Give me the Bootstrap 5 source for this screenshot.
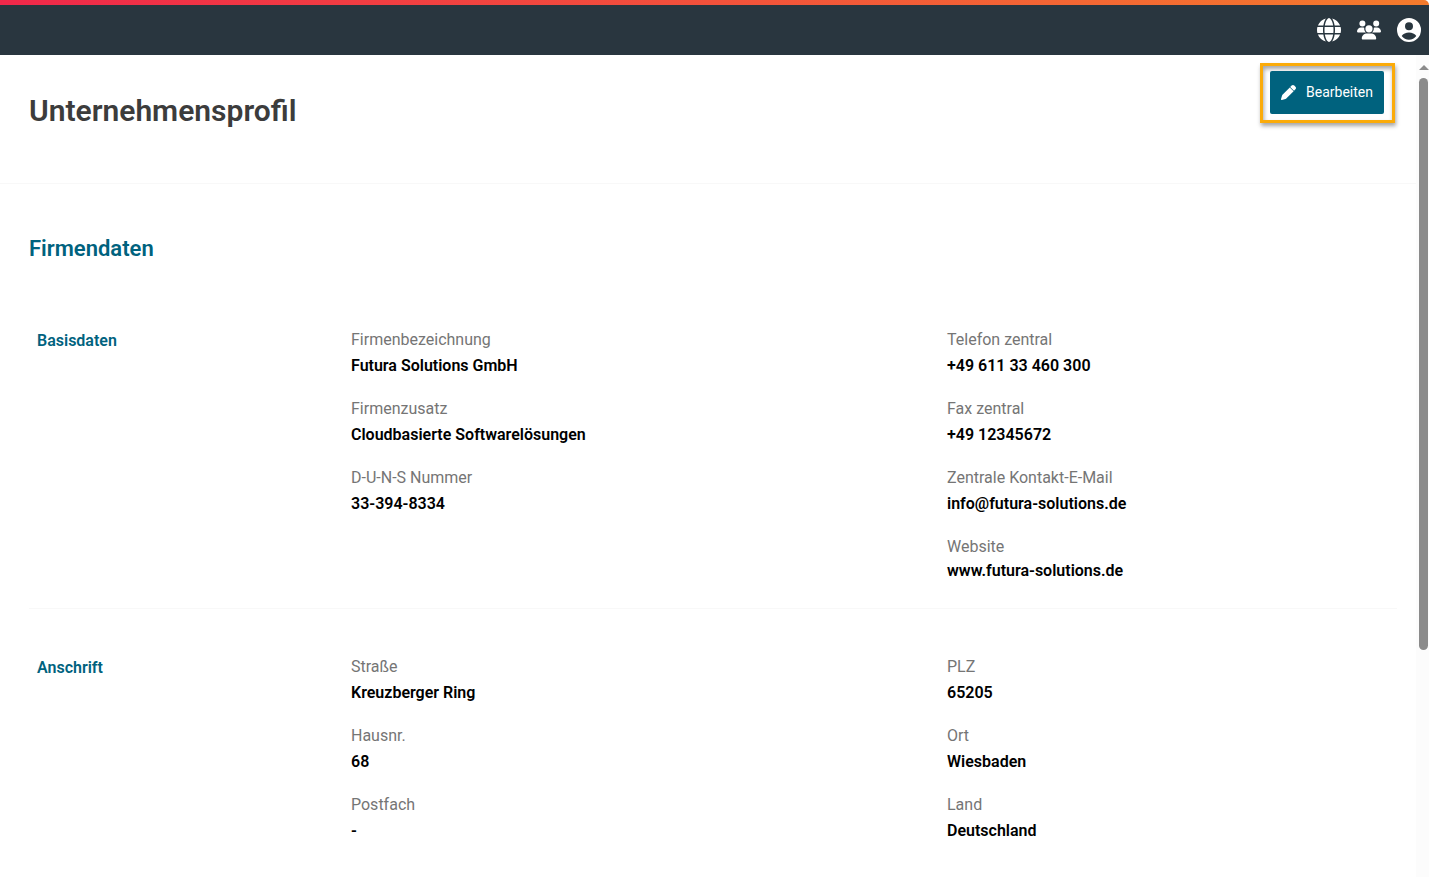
<!DOCTYPE html>
<html lang="de">
<head>
<meta charset="utf-8">
<meta name="viewport" content="width=device-width, initial-scale=1">
<title>Unternehmensprofil</title>
<link href="https://cdn.jsdelivr.net/npm/bootstrap@5.3.0/dist/css/bootstrap.min.css" rel="stylesheet">
<style>
  body { font-family: Roboto, "Liberation Sans", sans-serif; font-size: 16px; color: #000; background: #fff; }
  .accent-bar { height: 5px; background: linear-gradient(90deg, #f0284a, #f47b2c); border-top-right-radius: 6px; }
  .topbar { height: 50px; background: #29363f; padding-right: 8px; }
  .topbar a { color: #fff; width: 24px; height: 24px; }
  .page-head { height: 129px; padding: 8px 21px 0 29px; border-bottom: 1px solid #f8f8f8; }
  .page-head h1 { font-size: 30px; line-height: 40px; font-weight: 600; color: #3c3c3c; padding-top: 28px; }
  .edit-frame { border: 3px solid #fbab09; padding: 5px 8px 6px 7px; box-shadow: 1px 3px 4px rgba(0,0,0,.35), inset 1px 3px 4px rgba(0,0,0,.35); }
  .edit-btn { height: 43px; padding: 0 11px 1px; gap: 10px; border: 0; border-radius: 2px; background: #00627e; color: #fff; font-size: 14px; line-height: 20px; }
  .edit-btn:hover { background: #00526a; color: #fff; }
  .page-body { padding: 49px 19px 0 29px; }
  h2 { font-size: 22px; line-height: 32px; font-weight: 600; color: #00627e; }
  .data-section { display: grid; grid-template-columns: 157fr 298fr 229fr; padding-bottom: 9px; }
  .data-section:first-of-type { padding-top: 50px; }
  .data-section + .data-section { padding-top: 45px; border-top: 1px solid #f8f8f8; }
  .data-section > * { padding: 0 8px; }
  h3 { font-size: 16px; line-height: 28px; font-weight: 600; color: #00627e; }
  dt { font-weight: 400; line-height: 26px; color: #757575; }
  dd { font-weight: 600; line-height: 26px; margin: 0 0 17px; }
  dd.web-address { line-height: 22px; }
  dd a { color: #000; text-decoration: none; }
  .scroll-rail { width: 13px; background: #fcfcfc; padding: 10px 1px 0 3px; }
  .scroll-arrow { border: 5px solid transparent; border-top: 0; border-bottom-color: #8b8b8b; }
  .scroll-thumb { width: 9px; height: calc(70% + 4px); margin-top: 8px; border-radius: 5px; background: #8b8b8b; }
</style>
</head>
<body class="d-flex flex-column vh-100 overflow-hidden">
<header class="flex-shrink-0">
  <div class="accent-bar"></div>
  <nav class="topbar d-flex align-items-center justify-content-end gap-3" aria-label="Hauptnavigation">
    <a href="#" class="d-flex" aria-label="Sprache">
      <svg width="24" height="24" viewBox="0 0 512 512" fill="currentColor"><path d="M352 256c0 22.200-1.200 43.600-3.300 64H163.300c-2.200-20.400-3.300-41.800-3.300-64s1.200-43.600 3.300-64H348.700c2.200 20.400 3.300 41.800 3.300 64zm28.800-64H503.900c5.300 20.500 8.100 41.900 8.100 64s-2.800 43.500-8.100 64H380.800c2.100-20.600 3.200-42 3.200-64s-1.100-43.400-3.200-64zm112.600-32H376.700c-10-63.900-29.800-117.400-55.300-151.600c78.300 20.700 142 77.500 171.900 151.600zm-149.100 0H167.700c6.100-36.400 15.500-68.600 27-94.700c10.500-23.600 22.200-40.700 33.500-51.500C239.400 3.200 248.700 0 256 0s16.600 3.200 27.800 13.800c11.300 10.800 23 27.900 33.500 51.500c11.600 26 20.900 58.200 27 94.700zm-209 0H18.600C48.600 85.900 112.200 29.100 190.600 8.400C165.100 42.600 145.300 96.100 135.300 160zM8.100 192H131.200c-2.100 20.600-3.200 42-3.200 64s1.100 43.400 3.200 64H8.100C2.800 299.500 0 278.100 0 256s2.800-43.500 8.100-64zM194.700 446.600c-11.600-26-20.900-58.200-27-94.600H344.300c-6.100 36.400-15.500 68.600-27 94.600c-10.500 23.600-22.200 40.700-33.500 51.500C272.600 508.800 263.300 512 256 512s-16.600-3.200-27.800-13.800c-11.300-10.800-23-27.900-33.500-51.500zM135.300 352c10 63.900 29.800 117.400 55.300 151.600C112.200 482.900 48.600 426.100 18.600 352H135.300zm358.100 0c-30 74.100-93.600 130.900-171.900 151.600c25.500-34.200 45.200-87.700 55.300-151.600H493.400z"/></svg>
    </a>
    <a href="#" class="d-flex" aria-label="Benutzer">
      <svg width="24" height="24" viewBox="0 0 640 640" fill="currentColor"><g transform="translate(0 64)"><path d="M144 0a80 80 0 1 1 0 160A80 80 0 1 1 144 0zM512 0a80 80 0 1 1 0 160A80 80 0 1 1 512 0zM0 298.700C0 239.800 47.800 192 106.700 192h42.700c15.900 0 31 3.500 44.600 9.700c-1.300 7.200-1.900 14.700-1.900 22.300c0 38.200 16.800 72.500 43.300 96H21.300C9.600 320 0 310.400 0 298.700zM405.300 320h-.7c26.600-23.500 43.300-57.800 43.300-96c0-7.600-.7-15-1.900-22.300c13.600-6.300 28.700-9.700 44.600-9.700h42.700C592.200 192 640 239.800 640 298.700c0 11.800-9.600 21.300-21.300 21.300H405.300zM224 224a96 96 0 1 1 192 0 96 96 0 1 1-192 0zM128 485.300C128 411.700 187.700 352 261.300 352H378.700C452.300 352 512 411.700 512 485.300c0 14.700-11.900 26.700-26.700 26.700H154.700c-14.700 0-26.700-11.900-26.700-26.700z"/></g></svg>
    </a>
    <a href="#" class="d-flex" aria-label="Konto">
      <svg width="24" height="24" viewBox="0 0 24 24" fill="currentColor"><path fill-rule="evenodd" d="M12 0a12 12 0 1 0 0 24a12 12 0 1 0 0-24zM12 4.200a4 4 0 1 1 0 8a4 4 0 1 1 0-8zM12 14.500c3 0 6 1.500 7.300 3.500a9 9 0 0 1-14.600 0c1.300-2 4.300-3.500 7.300-3.500z"/></svg>
    </a>
  </nav>
</header>
<div class="d-flex flex-grow-1 overflow-hidden">
  <main class="flex-grow-1 overflow-hidden">
    <div class="page-head d-flex justify-content-between align-items-start">
      <h1 class="m-0">Unternehmensprofil</h1>
      <div class="edit-frame">
        <button type="button" class="btn edit-btn d-flex align-items-center">
          <svg width="15" height="15" viewBox="0 0 512 512" fill="currentColor" aria-hidden="true"><path d="M362.700 19.300L314.300 67.700 444.300 197.700l48.400-48.400c25-25 25-65.500 0-90.500L453.300 19.300c-25-25-65.500-25-90.500 0zm-62 62L58.600 323.500c-10.400 10.400-18 23.300-22.200 37.400L1 481.200C-1.500 489.700 .8 498.800 7 505s15.300 8.500 23.700 6.100l120.300-35.400c14.100-4.200 27-11.800 37.400-22.200L430.700 211.300z"/></svg>
          <span>Bearbeiten</span>
        </button>
      </div>
    </div>
    <div class="page-body">
      <h2 class="m-0 pb-2">Firmendaten</h2>
      <section class="data-section">
        <h3 class="m-0 pt-1">Basisdaten</h3>
        <dl class="m-0 pt-1">
          <dt>Firmenbezeichnung</dt><dd>Futura Solutions GmbH</dd>
          <dt>Firmenzusatz</dt><dd>Cloudbasierte Softwarelösungen</dd>
          <dt>D-U-N-S Nummer</dt><dd>33-394-8334</dd>
        </dl>
        <dl class="m-0 pt-1">
          <dt>Telefon zentral</dt><dd>+49 611 33 460 300</dd>
          <dt>Fax zentral</dt><dd>+49 12345672</dd>
          <dt>Zentrale Kontakt-E-Mail</dt><dd>info@futura-solutions.de</dd>
          <dt>Website</dt><dd class="web-address"><a href="#">www.futura-solutions.de</a></dd>
        </dl>
      </section>
      <section class="data-section">
        <h3 class="m-0">Anschrift</h3>
        <dl class="m-0">
          <dt>Straße</dt><dd>Kreuzberger Ring</dd>
          <dt>Hausnr.</dt><dd>68</dd>
          <dt>Postfach</dt><dd>-</dd>
        </dl>
        <dl class="m-0">
          <dt>PLZ</dt><dd>65205</dd>
          <dt>Ort</dt><dd>Wiesbaden</dd>
          <dt>Land</dt><dd>Deutschland</dd>
        </dl>
      </section>
    </div>
  </main>
  <div class="scroll-rail d-flex flex-column align-items-center flex-shrink-0" aria-hidden="true">
    <div class="scroll-arrow"></div>
    <div class="scroll-thumb"></div>
  </div>
</div>
<script src="https://cdn.jsdelivr.net/npm/bootstrap@5.3.0/dist/js/bootstrap.bundle.min.js"></script>
</body>
</html>
